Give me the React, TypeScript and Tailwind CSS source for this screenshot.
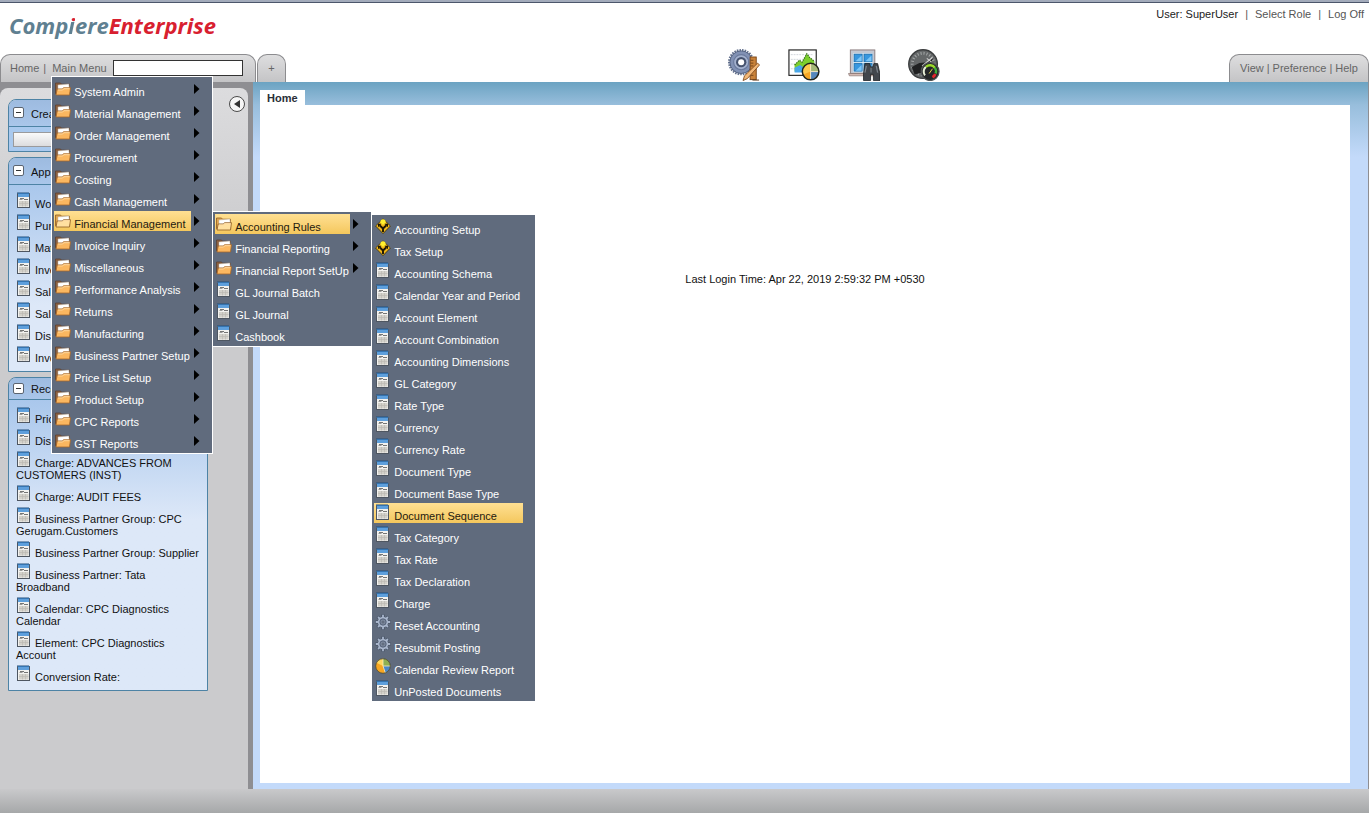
import React from 'react';

type IconKind = 'folder' | 'window' | 'workflow' | 'process' | 'report';

interface MenuEntry {
  label: string;
  icon: IconKind;
  active?: boolean;
  children?: MenuEntry[];
}

const accountingRules: MenuEntry[] = [
  { label: 'Accounting Setup', icon: 'workflow' },
  { label: 'Tax Setup', icon: 'workflow' },
  { label: 'Accounting Schema', icon: 'window' },
  { label: 'Calendar Year and Period', icon: 'window' },
  { label: 'Account Element', icon: 'window' },
  { label: 'Account Combination', icon: 'window' },
  { label: 'Accounting Dimensions', icon: 'window' },
  { label: 'GL Category', icon: 'window' },
  { label: 'Rate Type', icon: 'window' },
  { label: 'Currency', icon: 'window' },
  { label: 'Currency Rate', icon: 'window' },
  { label: 'Document Type', icon: 'window' },
  { label: 'Document Base Type', icon: 'window' },
  { label: 'Document Sequence', icon: 'window', active: true },
  { label: 'Tax Category', icon: 'window' },
  { label: 'Tax Rate', icon: 'window' },
  { label: 'Tax Declaration', icon: 'window' },
  { label: 'Charge', icon: 'window' },
  { label: 'Reset Accounting', icon: 'process' },
  { label: 'Resubmit Posting', icon: 'process' },
  { label: 'Calendar Review Report', icon: 'report' },
  { label: 'UnPosted Documents', icon: 'window' },
];

const financialManagement: MenuEntry[] = [
  { label: 'Accounting Rules', icon: 'folder', active: true, children: accountingRules },
  { label: 'Financial Reporting', icon: 'folder' },
  { label: 'Financial Report SetUp', icon: 'folder' },
  { label: 'GL Journal Batch', icon: 'window' },
  { label: 'GL Journal', icon: 'window' },
  { label: 'Cashbook', icon: 'window' },
];

const mainMenu: MenuEntry[] = [
  { label: 'System Admin', icon: 'folder' },
  { label: 'Material Management', icon: 'folder' },
  { label: 'Order Management', icon: 'folder' },
  { label: 'Procurement', icon: 'folder' },
  { label: 'Costing', icon: 'folder' },
  { label: 'Cash Management', icon: 'folder' },
  { label: 'Financial Management', icon: 'folder', active: true, children: financialManagement },
  { label: 'Invoice Inquiry', icon: 'folder' },
  { label: 'Miscellaneous', icon: 'folder' },
  { label: 'Performance Analysis', icon: 'folder' },
  { label: 'Returns', icon: 'folder' },
  { label: 'Manufacturing', icon: 'folder' },
  { label: 'Business Partner Setup', icon: 'folder' },
  { label: 'Price List Setup', icon: 'folder' },
  { label: 'Product Setup', icon: 'folder' },
  { label: 'CPC Reports', icon: 'folder' },
  { label: 'GST Reports', icon: 'folder' },
];

const applications = ['Work', 'Purch', 'Mater', 'Invent', 'Sales', 'Sales', 'Disp', 'Invoice'];

const recentItems = [
  'Price',
  'Disc',
  'Charge: ADVANCES FROM CUSTOMERS (INST)',
  'Charge: AUDIT FEES',
  'Business Partner Group: CPC Gerugam.Customers',
  'Business Partner Group: Supplier',
  'Business Partner: Tata Broadband',
  'Calendar: CPC Diagnostics Calendar',
  'Element: CPC Diagnostics Account',
  'Conversion Rate:',
];

function FolderIcon({ open }: { open?: boolean }) {
  return (
    <svg viewBox="0 0 16 16" className="w-4 h-4 shrink-0" aria-hidden="true">
      <path
        d="M.5 3h5l1 1.200h8v9.500H.5z"
        fill={open ? '#e0a550' : '#8d6241'}
        stroke={open ? '#8e5a22' : '#5a4030'}
        strokeWidth=".8"
      />
      <path d="M3 5l10.800-1 .5 5H3z" fill="#fff" stroke="#c4bcb0" strokeWidth=".5" />
      <path
        d="M1 15l1.200-6h5l1.400-1.300h6.900L14.500 15z"
        fill={open ? '#ffe0a0' : '#fbb760'}
        stroke={open ? '#8e5a22' : '#a8682a'}
        strokeWidth=".8"
        strokeLinejoin="round"
      />
      <path d="M3 10h4.600l1.300-1.300h5.600" fill="none" stroke="#ffdda6" strokeWidth=".9" />
    </svg>
  );
}

function WindowIcon({ className = 'w-4 h-4 shrink-0' }: { className?: string }) {
  return (
    <svg viewBox="0 0 16 16" className={className} aria-hidden="true">
      <rect x="1.500" y="1.500" width="12" height="14" fill="#f3f2ef" stroke="#4e5661" />
      <rect x="2" y="1" width="11" height="4" fill="#5e9fdc" />
      <path d="M1.500.5h12" stroke="#24507c" strokeDasharray="1 1" />
      <path d="M1.500 1.500h12" stroke="#3574b0" />
      <path d="M3.500 7.500h3" stroke="#9a9a98" />
      <path d="M4 6.500h4M8 7.500h4" stroke="#555" strokeWidth=".8" />
      <path d="M3 9h9.500v5.500H3z" fill="#d3d1ca" />
      <path d="M3 11.500h9.500M6.500 9v5.500M9.500 9v5.500" stroke="#b9b6ae" strokeWidth=".6" />
    </svg>
  );
}

function WorkflowIcon() {
  return (
    <svg viewBox="0 0 16 16" className="w-4 h-4 shrink-0" aria-hidden="true">
      <path d="M8 .8L15.400 8 8 15.600.6 8z" fill="#f2b81a" stroke="#3b2e08" strokeWidth=".8" strokeLinejoin="round" />
      <circle cx="8" cy="3.800" r="2.600" fill="#fff02e" />
      <path d="M8 14V10.500L4.800 7.500M8 10.500l3.200-3" fill="none" stroke="#1c1604" strokeWidth="1.900" />
      <path d="M3 9.200V5.800h3.600zM13 9.200V5.800H9.400z" fill="#1c1604" />
    </svg>
  );
}

function ProcessIcon() {
  return (
    <svg viewBox="0 0 16 16" className="w-4 h-4 shrink-0" aria-hidden="true">
      <g stroke="#3d4a5e" strokeWidth="3">
        <path d="M8 .5v15M.5 8h15M2.700 2.700l10.600 10.600M13.300 2.700L2.700 13.300" />
      </g>
      <g stroke="#a9b6cc" strokeWidth="1.800">
        <path d="M8 .8v14.400M.8 8h14.400M3 3l10 10M13 3L3 13" />
      </g>
      <circle cx="8" cy="8" r="5.200" fill="#a9b6cc" />
      <circle cx="8" cy="8" r="3.200" fill="#7c899e" stroke="#465369" strokeWidth=".8" />
      <circle cx="8" cy="8" r="1.500" fill="#636e80" />
    </svg>
  );
}

function ReportIcon() {
  return (
    <svg viewBox="0 0 16 16" className="w-4 h-4 shrink-0" aria-hidden="true">
      <circle cx="8" cy="8" r="7.300" fill="#f6a623" />
      <path d="M8 8V.7A7.300 7.300 0 0 1 15.300 8z" fill="#8fb052" />
      <path d="M8 8h7.300a7.300 7.300 0 0 1-5 6.900z" fill="#4a87c7" />
      <path d="M8 8V.7A7.300 7.300 0 0 0 1.500 4.800z" fill="#ffd75e" />
      <path d="M8 .7V8l2.300 6.900M8 8h7.300" fill="none" stroke="#fbeec0" strokeWidth=".8" />
      <circle cx="8" cy="8" r="7.300" fill="none" stroke="#4a4a34" strokeWidth=".8" />
    </svg>
  );
}

function EntryIcon({ kind, open }: { kind: IconKind; open?: boolean }) {
  switch (kind) {
    case 'folder':
      return <FolderIcon open={open} />;
    case 'workflow':
      return <WorkflowIcon />;
    case 'process':
      return <ProcessIcon />;
    case 'report':
      return <ReportIcon />;
    default:
      return <WindowIcon />;
  }
}

function MenuList({ entries, className }: { entries: MenuEntry[]; className: string }) {
  return (
    <ul className={`absolute z-20 border border-white bg-[#606b7d] pt-0.5 ${className}`}>
      {entries.map((entry) => {
        const hasArrow = entry.icon === 'folder';
        return (
          <li key={entry.label} className="relative flex h-[22px] items-start pl-0.5">
            <button
              type="button"
              className={`flex h-5 flex-1 items-start gap-[3px] pl-px pt-px text-left whitespace-nowrap cursor-pointer ${
                entry.active ? 'bg-linear-to-b from-[#ffe092] to-[#f4c75c] text-[#1f1a10]' : 'text-white'
              }`}
            >
              <EntryIcon kind={entry.icon} open={entry.active} />
              <span className="pt-[5px] leading-[14px]">{entry.label}</span>
            </button>
            {hasArrow ? (
              <span className="w-[21px] shrink-0 pl-[3px] pt-[5px]" aria-hidden="true">
                <svg viewBox="0 0 6 10" className="w-1.5 h-2.5">
                  <path d="M0 0l5.500 5L0 10z" fill="#000" />
                </svg>
              </span>
            ) : (
              <span className="w-3 shrink-0" />
            )}
            {entry.children && (
              <MenuList
                entries={entry.children}
                className={entry.label === 'Financial Management' ? 'left-full top-0 w-40' : 'left-full top-0 w-[165px]'}
              />
            )}
          </li>
        );
      })}
    </ul>
  );
}

function Panel({
  title,
  tall,
  bodyClass,
  children,
}: {
  title: string;
  tall?: boolean;
  bodyClass: string;
  children: React.ReactNode;
}) {
  return (
    <section className="overflow-hidden rounded-tl-lg border border-[#4d83a5]">
      <header
        className={`flex items-start gap-[7px] border-b border-[#4d83a5] bg-linear-to-b from-[#9dbbe0] to-[#a9c6ea] pl-1 ${
          tall ? 'h-[27px] pt-[7px]' : 'h-[22px] pt-[5px]'
        }`}
      >
        <button
          type="button"
          aria-label={`Collapse ${title}`}
          className="flex h-[11px] w-[11px] items-center justify-center rounded-xs border border-[#5b6470] bg-white cursor-pointer"
        >
          <span className="h-px w-[5px] bg-[#333]" />
        </button>
        <h2 className={tall ? 'pt-px leading-3' : 'leading-3'}>{title}</h2>
      </header>
      <div className={bodyClass}>{children}</div>
    </section>
  );
}

function LinkList({ items }: { items: string[] }) {
  return (
    <ul className="pb-[3px] pl-[7px] pr-1.5 pt-[7px]">
      {items.map((item, i) => (
        <li key={i} className="pb-1 leading-3">
          <a href="#">
            <WindowIcon className="mr-[3px] inline-block h-4 w-4 align-baseline" />
            {item}
          </a>
        </li>
      ))}
    </ul>
  );
}

function GearToolIcon() {
  return (
    <svg viewBox="0 0 34 34" className="h-8 w-8" aria-hidden="true">
      <circle cx="14" cy="14" r="12.500" fill="none" stroke="#64728f" strokeWidth="3" strokeDasharray="1.600 1.100" />
      <circle cx="14" cy="14" r="12" fill="#8191b4" stroke="#52617f" />
      <circle cx="14" cy="14" r="8" fill="#a3b1ce" stroke="#6a7a9d" strokeWidth="1.200" />
      <circle cx="14" cy="14" r="5.500" fill="#46536f" />
      <circle cx="14" cy="14" r="3.200" fill="#fff" />
      <rect x="23.500" y="8.500" width="6.500" height="24" fill="#c98239" stroke="#7b4619" />
      <path d="M24 12h3M24 15h3M24 18h3M24 28h3" stroke="#5d3512" strokeWidth=".8" />
      <path d="M31.500 15l2 2-13 14.500-4.500 2 1.500-5z" fill="#f2b878" stroke="#7b4619" strokeWidth=".9" />
      <path d="M26 33h7" stroke="#5d3512" />
    </svg>
  );
}

function ChartReportIcon() {
  return (
    <svg viewBox="0 0 34 34" className="h-8 w-8" aria-hidden="true">
      <rect x="1" y="1" width="29" height="27" fill="#fff" stroke="#1d1d1d" strokeWidth="1.200" />
      <path d="M3 6h24M3 11h24M3 16h24M3 21h24" stroke="#c9ced6" strokeWidth=".9" strokeDasharray="2 1" />
      <path d="M7 24V17l5-5 3 2 5-9 3 4 5 4v11z" fill="#7dcf2e" />
      <path d="M7 17l5-5 3 2 5-9 3 4 5 4" fill="none" stroke="#2e6b12" strokeWidth="1.200" strokeDasharray="1.500 1" />
      <path d="M7 25v-5l6-3 4 3 5 2v3z" fill="#4aa6e8" />
      <circle cx="24" cy="24" r="8.800" fill="#f6a623" />
      <path d="M24 24v-8.500a8.500 8.500 0 0 1 8.500 8.500z" fill="#a6b978" />
      <path d="M24 24h8.500a8.500 8.500 0 0 1-8.500 8.500z" fill="#5487bd" />
      <path d="M24 24l-8 3a8.500 8.500 0 0 1 8-11.500z" fill="#ffc94d" />
      <path d="M24 15.500v17M24 24h8.500" stroke="#f7eccb" />
      <circle cx="24" cy="24" r="8.800" fill="none" stroke="#20241c" strokeWidth="1.600" />
    </svg>
  );
}

function BrowseWindowIcon() {
  return (
    <svg viewBox="0 0 34 34" className="h-8 w-8" aria-hidden="true">
      <rect x="2.500" y="1" width="26" height="25" fill="#c3c8d2" stroke="#8a7a7c" />
      <path d="M.5 26h28l-1 2.500h-26z" fill="#d3b9b2" stroke="#84706c" strokeWidth=".7" />
      <rect x="5.500" y="4.500" width="20.500" height="20" fill="#e9f4fb" />
      <g stroke="#1a6dac" strokeWidth=".9" fill="#3797df">
        <rect x="6.500" y="5.500" width="8.500" height="8" />
        <rect x="17" y="5.500" width="8.500" height="8" />
        <rect x="6.500" y="15.500" width="8.500" height="8" />
        <rect x="17" y="15.500" width="8.500" height="8" />
      </g>
      <path d="M8 13l6.500-6v6zM18.500 13l6.500-6v6zM8 23l6.500-6v6zM18.500 23l6.500-6v6z" fill="#7cc6f7" />
      <path
        d="M18 15.500h5l1 3.500h2.500l1-3.500h4l2.500 11v7h-7v-6.500h-3v6.500h-7.500v-7z"
        fill="#42474d"
        stroke="#1a1d20"
        strokeWidth=".8"
      />
      <path d="M19.500 18l-1.500 7M30 18l1.500 7" stroke="#7d858d" strokeWidth="1.300" />
      <path d="M24.500 20v5" stroke="#6c747b" strokeWidth="1.500" />
    </svg>
  );
}

function GaugeIcon() {
  return (
    <svg viewBox="0 0 34 34" className="h-8 w-8" aria-hidden="true">
      <circle cx="16" cy="16" r="15.200" fill="#646768" stroke="#3b3d3e" strokeWidth="1.500" />
      <circle cx="16" cy="16" r="11.500" fill="none" stroke="#a9acac" strokeWidth="3" strokeDasharray="1 2.200" />
      <path d="M4 19l8-4 9-1 6-5-3 7-9 9-8 2z" fill="#202122" />
      <path d="M15 18l11-9M20 10l5 4" stroke="#d0d0d0" strokeWidth="1.200" />
      <circle cx="23.500" cy="24" r="9.500" fill="#242727" stroke="#515454" strokeWidth="1.300" />
      <path d="M18 28a6.500 6.500 0 0 1 1-9" fill="none" stroke="#e8f0d8" strokeWidth="2.200" />
      <path d="M19 19a6.500 6.500 0 0 1 9.500.8" fill="none" stroke="#9bd92c" strokeWidth="2.600" />
      <path d="M28.500 19.800a6.500 6.500 0 0 1 .8 6.200" fill="none" stroke="#3fae3a" strokeWidth="2.600" />
      <path d="M29 26.500a6.500 6.500 0 0 1-3 3.500" fill="none" stroke="#e0272c" strokeWidth="3" />
      <path d="M22.500 26l3.500-5" stroke="#f0e050" />
    </svg>
  );
}

const shortcuts = [
  { label: 'Setup', icon: <GearToolIcon /> },
  { label: 'Reports', icon: <ChartReportIcon /> },
  { label: 'Browse', icon: <BrowseWindowIcon /> },
  { label: 'Dashboard', icon: <GaugeIcon /> },
];

function Header() {
  return (
    <div className="relative flex flex-col">
      <div className="h-[3px] border-b border-[#4c566b] bg-[#a3abbb]" />
      <div className="flex h-[51px] items-start justify-between pl-[9px] pr-[5px]">
        <h1 className="pt-2 font-['Open_Sans','Noto_Sans',sans-serif] text-[22px] leading-7 font-bold italic text-[#5f8091]">
          Comp
          <span className="bg-linear-to-b from-[#d8202f] from-36% to-[#5f8091] to-36% bg-clip-text text-transparent">i</span>
          ere<span className="text-[#d8202f]">Enterprise</span>
        </h1>
        <div className="flex gap-[7px] pt-1 leading-[14px] text-[#555]">
          <span className="text-[#222]">User: SuperUser</span>
          <span>|</span>
          <a href="#">Select Role</a>
          <span>|</span>
          <a href="#">Log Off</a>
        </div>
      </div>

      <div className="flex h-7 items-stretch text-[#666]">
        <nav className="flex w-64 items-center rounded-t-[10px] border border-b-0 border-[#8c8c8f] bg-linear-to-b from-[#dededf] to-[#c4c4c6] pl-[9px]">
          <a href="#">Home</a>
          <span className="pl-1">|</span>
          <div className="relative pl-1.5">
            <button type="button" className="cursor-pointer">
              Main Menu
            </button>
            <MenuList entries={mainMenu} className="left-[5px] top-4 w-[162px]" />
          </div>
          <input
            type="text"
            aria-label="Search menu"
            className="ml-1.5 mt-[5px] h-4 w-[130px] self-start border border-[#333] bg-white px-1 text-black outline-none"
          />
        </nav>
        <button
          type="button"
          aria-label="New tab"
          className="ml-px w-[29px] rounded-t-[10px] border border-b-0 border-[#8c8c8f] bg-linear-to-b from-[#dededf] to-[#c4c4c6] cursor-pointer"
        >
          +
        </button>
        <div className="flex-1" />
        <div className="flex w-[140px] items-center justify-center gap-[3px] rounded-t-[10px] border border-b-0 border-[#8c8c8f] bg-linear-to-b from-[#dededf] to-[#c4c4c6]">
          <a href="#">View</a>
          <span>|</span>
          <a href="#">Preference</a>
          <span>|</span>
          <a href="#">Help</a>
        </div>
      </div>

      {/* shortcut toolbar floats over the middle of the header */}
      <div className="absolute bottom-px left-[53.2%] flex gap-7">
        {shortcuts.map((s) => (
          <button key={s.label} type="button" aria-label={s.label} title={s.label} className="cursor-pointer">
            {s.icon}
          </button>
        ))}
      </div>
    </div>
  );
}

function Sidebar() {
  return (
    <aside className="flex w-[253px] shrink-0 flex-col bg-[#8e8e92] pr-[5px] pt-1.5">
      <div className="flex flex-1 items-start rounded-t-lg bg-linear-to-b from-[#dcdcde] to-[#cbcbcd] to-[160px] pl-2 pt-[11px]">
        <div className="flex w-[200px] flex-col gap-[5px]">
          <Panel title="Create" tall bodyClass="bg-[#a9c9ee] px-1 pt-[5px] pb-1">
            <button
              type="button"
              aria-label="Create"
              className="block h-[15px] w-[120px] border border-[#9a9a9c] bg-linear-to-b from-[#fafafa] to-[#dcdcde]"
            />
          </Panel>
          <Panel title="Apps" tall bodyClass="bg-linear-to-b from-[#a9c7ec] to-[#dde8f8] to-[120px]">
            <LinkList items={applications} />
          </Panel>
          <Panel title="Recent" bodyClass="bg-linear-to-b from-[#a9c7ec] to-[#dde8f8] to-[120px]">
            <LinkList items={recentItems} />
          </Panel>
        </div>
        <button
          type="button"
          aria-label="Hide sidebar"
          className="-mt-[3px] ml-[21px] flex h-4 w-4 items-center justify-center rounded-full border border-[#4a4a4a] bg-[#f6f6f6] cursor-pointer"
        >
          <svg viewBox="0 0 6 8" className="mr-px h-2 w-1.5" aria-hidden="true">
            <path d="M6 0v8L0 4z" fill="#333" />
          </svg>
        </button>
      </div>
    </aside>
  );
}

export default function App() {
  return (
    <div className="flex min-h-screen flex-col bg-white font-['Liberation_Sans',Arial,sans-serif] text-[11px] text-[#111]">
      <Header />
      <div className="flex flex-1">
        <Sidebar />
        <main className="flex flex-1 flex-col border-r border-[#8e8e92] bg-linear-to-b from-[#6ba3c2] via-[#98bedc] via-[23px] to-[#c3dafa] to-[75px] pb-1.5 pl-[7px] pr-[18px] pt-2">
          <div className="flex">
            <h2 className="bg-white px-[7px] pt-0.5 text-[11px] leading-[13px] font-bold text-[#2a2f38]">Home</h2>
          </div>
          <div className="flex-1 bg-white">
            <p className="pt-[167px] text-center leading-[14px]">Last Login Time: Apr 22, 2019 2:59:32 PM +0530</p>
          </div>
        </main>
      </div>
      <footer className="h-6 bg-linear-to-b from-[#c9c9cb] to-[#a6a8a9]" />
    </div>
  );
}
